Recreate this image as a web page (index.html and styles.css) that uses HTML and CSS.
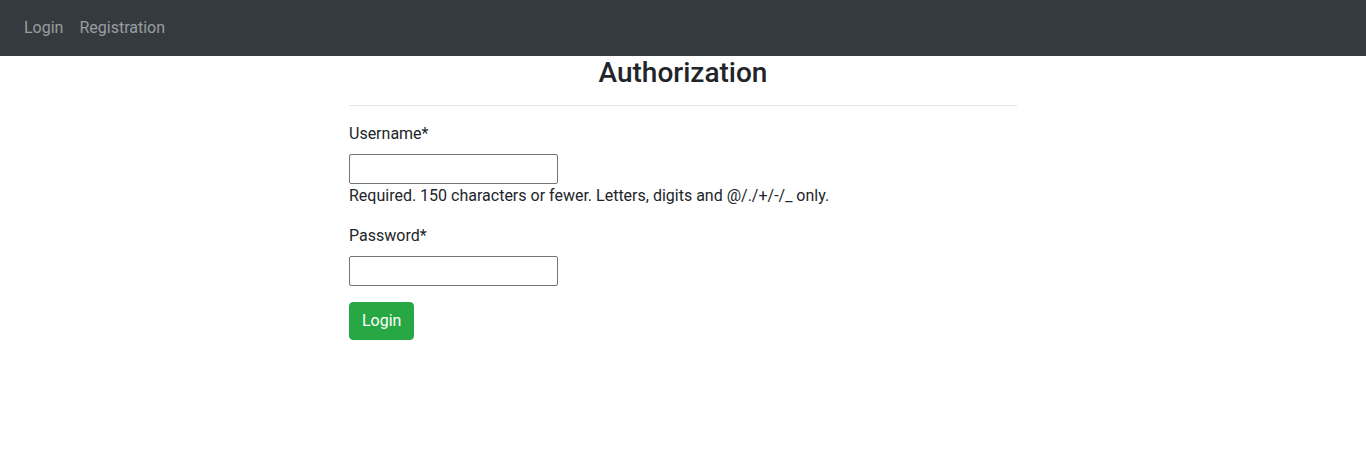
FILE: index.html
```html
<!DOCTYPE html>
<html lang="en">
<head>
<meta charset="utf-8">
<title>Authorization</title>
<link rel="stylesheet" href="styles.css">
</head>
<body>
<nav class="navbar">
  <a class="nav-link" href="#">Login</a>
  <a class="nav-link" href="#">Registration</a>
</nav>
<main class="content">
  <h3 class="title">Authorization</h3>
  <hr class="divider">
  <form class="form">
    <div class="field">
      <label class="field-label" for="u">Username*</label>
      <input class="field-input" id="u" type="text">
      <span class="helptext">Required. 150 characters or fewer. Letters, digits and @/./+/-/_ only.</span>
    </div>
    <div class="field">
      <label class="field-label" for="p">Password*</label>
      <input class="field-input" id="p" type="password">
    </div>
    <button class="btn-success" type="button">Login</button>
  </form>
</main>
</body>
</html>
```

FILE: styles.css
```css
* { box-sizing: border-box; }
body {
  margin: 0;
  font-family: Roboto, "Liberation Sans", sans-serif;
  font-size: 16px;
  line-height: 1.5;
  color: #212529;
  background: #fff;
}
.navbar {
  display: flex;
  align-items: center;
  height: 56px;
  padding: 8px 16px;
  background: #343a40;
}
.nav-link {
  padding: 8px;
  color: rgba(255,255,255,.5);
  text-decoration: none;
}
.content {
  width: 668px;
  margin: 0 auto;
}
.title {
  margin: 0;
  font-size: 28px;
  font-weight: 500;
  line-height: 33px;
  text-align: center;
}
.divider {
  margin: 16px 0 15px;
  border: 0;
  border-top: 1px solid rgba(0,0,0,.1);
}
.form { display: flex; flex-direction: column; align-items: flex-start; }
.field {
  display: flex;
  flex-direction: column;
  align-items: flex-start;
  margin-bottom: 15px;
}
.field-label { margin: 1px 0 8px; }
.field-input {
  width: 209px;
  height: 30px;
  padding: 1px 3px;
  font: inherit;
  border: 1px solid #767676;
  border-radius: 2px;
}
.btn-success {
  margin-top: 1px;
  padding: 6px 12px;
  font: inherit;
  line-height: 1.5;
  color: #fff;
  background: #28a745;
  border: 1px solid #28a745;
  border-radius: 4px;
}
```
